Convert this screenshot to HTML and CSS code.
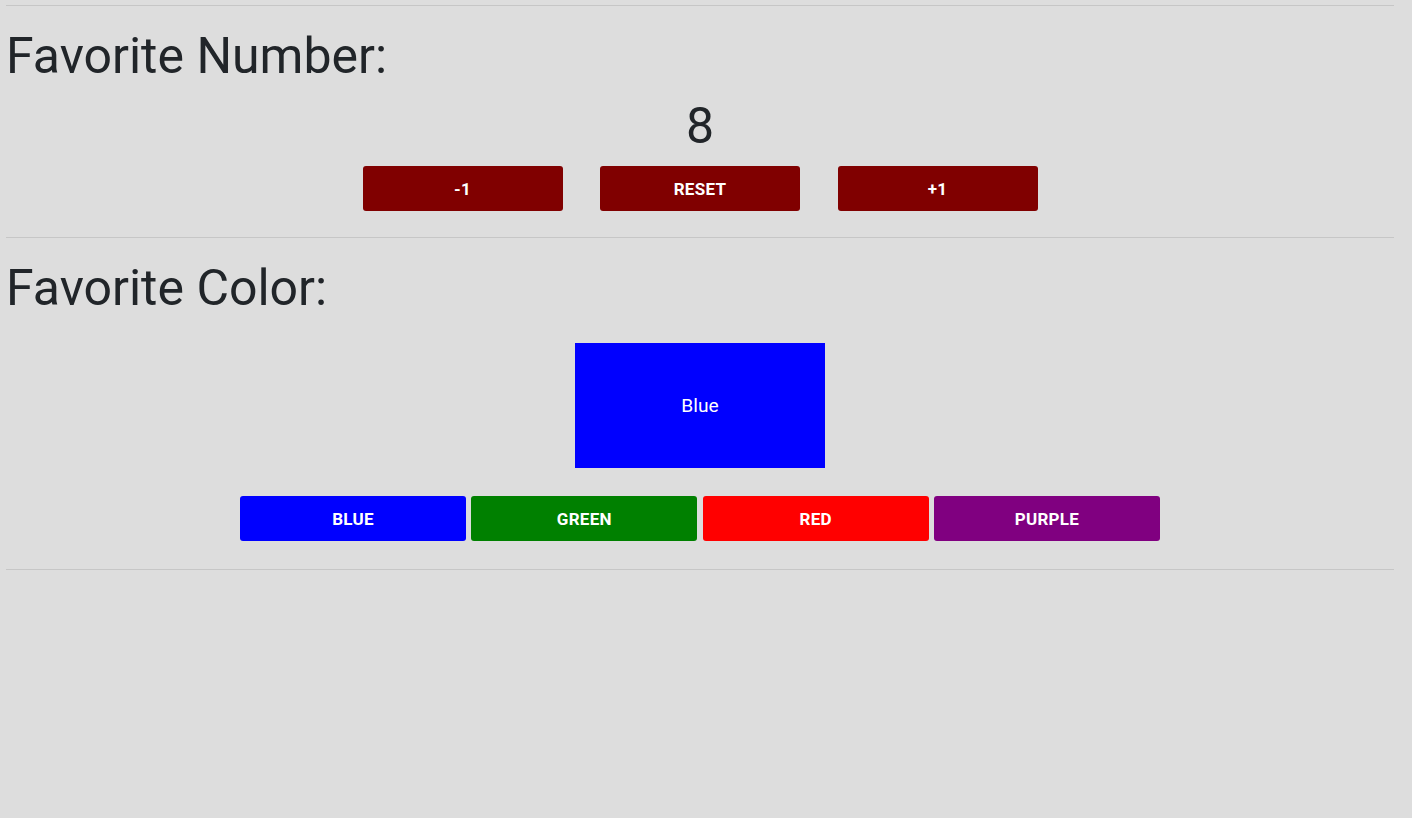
FILE: index.html
```html
<!DOCTYPE html>
<html lang="en">
<head>
<meta charset="utf-8">
<title>Favorites</title>
<link rel="stylesheet" href="styles.css">
</head>
<body>
<div class="page">
  <hr class="rule">
  <section class="section">
    <h1 class="title">Favorite Number:</h1>
    <div class="number">8</div>
    <div class="counter-row">
      <button class="btn btn-maroon">-1</button>
      <button class="btn btn-maroon">Reset</button>
      <button class="btn btn-maroon">+1</button>
    </div>
  </section>
  <hr class="rule">
  <section class="section">
    <h1 class="title">Favorite Color:</h1>
    <div class="swatch-wrap">
      <div class="swatch">Blue</div>
    </div>
    <div class="color-row">
      <button class="btn btn-color btn-blue">Blue</button>
      <button class="btn btn-color btn-green">Green</button>
      <button class="btn btn-color btn-red">Red</button>
      <button class="btn btn-color btn-purple">Purple</button>
    </div>
  </section>
  <hr class="rule">
</div>
</body>
</html>
```
FILE: styles.css
```css
html, body {
  margin: 0;
  padding: 0;
  background: #dddddd;
  height: 100%;
}
body {
  font-family: Roboto, "Liberation Sans", sans-serif;
  color: #212529;
}
.page {
  width: 1388px;
  padding: 5px 0 0 6px;
}
.rule {
  margin: 0;
  border: 0;
  border-top: 1px solid rgba(0, 0, 0, 0.1);
  height: 0;
}
.section {
  display: flex;
  flex-direction: column;
}
.title {
  margin: 20px 0 0 0;
  font-size: 50px;
  font-weight: 400;
  line-height: 60px;
}
.number {
  text-align: center;
  font-size: 50px;
  line-height: 60px;
  margin-top: 10px;
}
.counter-row {
  display: flex;
  justify-content: center;
  gap: 37.5px;
  margin-top: 10px;
  margin-bottom: 26px;
}
.btn {
  border: 0;
  border-radius: 3px;
  height: 45px;
  color: #ffffff;
  font-family: Roboto, "Liberation Sans", sans-serif;
  font-size: 17px;
  font-weight: 700;
  letter-spacing: 0.3px;
  text-transform: uppercase;
  padding: 0;
  cursor: pointer;
}
.btn-maroon {
  width: 200px;
  background: #800000;
}
.swatch-wrap {
  display: flex;
  justify-content: center;
  margin-top: 25px;
}
.swatch {
  width: 250px;
  height: 125px;
  background: #0000ff;
  color: #ffffff;
  display: flex;
  align-items: center;
  justify-content: center;
  font-size: 19.2px;
}
.color-row {
  display: flex;
  justify-content: center;
  gap: 5.3px;
  margin-top: 28px;
  margin-bottom: 28px;
}
.btn-color {
  width: 226px;
}
.btn-blue { background: #0000ff; }
.btn-green { background: #008000; }
.btn-red { background: #ff0000; }
.btn-purple { background: #800080; }
```
